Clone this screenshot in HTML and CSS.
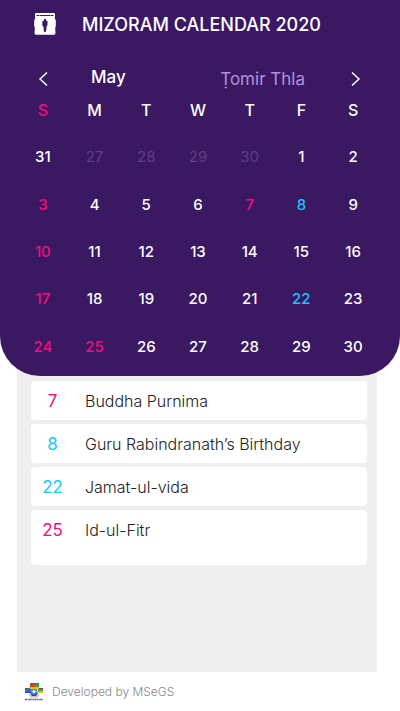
FILE: index.html
```html
<!DOCTYPE html>
<html lang="en">
<head>
<meta charset="utf-8">
<meta name="viewport" content="width=device-width, initial-scale=1">
<title>Mizoram Calendar 2020</title>
<link rel="stylesheet" href="styles.css">
</head>
<body>
<section class="calendar">
  <header class="topbar">
    <svg class="app-icon" viewBox="0 0 22 22" aria-hidden="true">
      <path fill="#fff" d="M2 0h18q1 0 1 1v3.500l-.4 1 1.200 1.500v6l-.6 2 .3 5q0 1.800-1.500 1.800H2Q.5 21.800.5 20l.3-5-.6-2V7l1.200-1.500-.4-1V1q0-1 1-1z"/>
      <path fill="#3a1862" d="M2.500 2h3v1h-3zM6 2h10v1H6zM16.500 2h3v1h-3zM10.500 5.500l1.300.5.4 1.500 1.300.5v4l-.9 1.500-.3 4-1.300 2-1.200-1-.2-4.500-1.300-1.500V8.500l1.500-1z"/>
    </svg>
    <h1 class="title">MIZORAM CALENDAR 2020</h1>
  </header>
  <nav class="months">
    <button class="arrow" type="button" aria-label="Previous month">
      <svg viewBox="0 0 10 16"><path d="M9 1.500 2 8l7 6.500"/></svg>
    </button>
    <h2 class="month">May</h2>
    <span class="local-month">Ṭomir Thla</span>
    <button class="arrow" type="button" aria-label="Next month">
      <svg viewBox="0 0 10 16"><path d="M1 1.500 8 8l-7 6.500"/></svg>
    </button>
  </nav>
  <table class="grid">
    <thead>
      <tr><th class="red">S</th><th>M</th><th>T</th><th>W</th><th>T</th><th>F</th><th>S</th></tr>
    </thead>
    <tbody>
      <tr><td>31</td><td class="muted">27</td><td class="muted">28</td><td class="muted">29</td><td class="muted">30</td><td>1</td><td>2</td></tr>
      <tr><td class="red">3</td><td>4</td><td>5</td><td>6</td><td class="red">7</td><td class="blue">8</td><td>9</td></tr>
      <tr><td class="red">10</td><td>11</td><td>12</td><td>13</td><td>14</td><td>15</td><td>16</td></tr>
      <tr><td class="red">17</td><td>18</td><td>19</td><td>20</td><td>21</td><td class="blue">22</td><td>23</td></tr>
      <tr><td class="red">24</td><td class="red">25</td><td>26</td><td>27</td><td>28</td><td>29</td><td>30</td></tr>
    </tbody>
  </table>
</section>
<main class="panel">
  <ul class="events">
    <li class="event"><span class="day red">7</span><span class="name">Buddha Purnima</span></li>
    <li class="event"><span class="day blue">8</span><span class="name">Guru Rabindranath’s Birthday</span></li>
    <li class="event"><span class="day blue">22</span><span class="name">Jamat-ul-vida</span></li>
    <li class="event tall"><span class="day red">25</span><span class="name">Id-ul-Fitr</span></li>
  </ul>
</main>
<footer class="footer">
  <svg class="logo" viewBox="0 0 20 20" aria-hidden="true">
    <path fill="#dcdfe4" d="M4 12h12l-2 4H6z"/>
    <path fill="#3168d4" d="M1 7h8v4H1z"/>
    <path fill="#d9402e" d="M6 2h5v3H6z"/>
    <path fill="#35a345" d="M11 2h4v3h-4zM14 7h5v2h-5z"/>
    <path fill="#efb91c" d="M6 5h9v2H6zM13 9h6v2h-6z"/>
    <path fill="#254a9b" d="M1 10h7v1H1zM6 11h8l-2 3H8z"/>
    <path stroke="#25334e" stroke-width=".8" fill="none" d="M6 1.500h9M1 6.500h5M15 6.500h4"/>
    <path fill="#4b8ce8" d="M7 7h6v4l-3 2-3-2z"/>
    <circle cx="10" cy="9.500" r="1.500" fill="#fff"/>
    <path fill="none" stroke="#b8bbc2" d="M5 13q5 4 10 0"/>
    <path fill="none" stroke="#666" stroke-width="1.500" stroke-dasharray="2 .4 1 .4" d="M1 17.500h18"/>
  </svg>
  <span>Developed by MSeGS</span>
</footer>
</body>
</html>
```
FILE: styles.css
```css
* {
  box-sizing: border-box;
}

body {
  display: flex;
  flex-direction: column;
  min-height: 100vh;
  margin: 0;
  background: #fff;
  font-family: Inter, "Open Sans", sans-serif;
  font-size: 16px;
}

.calendar {
  position: relative;
  padding-bottom: 6px;
  border-radius: 0 0 40px 40px;
  background: #3a1862;
  color: #fff;
}

.topbar {
  display: flex;
  align-items: center;
  gap: 26px;
  height: 48px;
  padding-left: 34px;
}

.app-icon {
  width: 22px;
  height: 22px;
}

.title {
  margin: 0;
  font-size: 18px;
  font-weight: 500;
}

.months {
  display: flex;
  align-items: center;
  height: 38px;
  padding: 24px 39px 0 38px;
}

.month,
.local-month {
  font-size: 17px;
  font-weight: 500;
  line-height: 20px;
}

.month {
  margin: 0 0 4px 43px;
}

.local-month {
  margin: 0 46px 0 auto;
  color: #b191dd;
  font-weight: 400;
}

.arrow {
  display: flex;
  padding: 0;
  border: 0;
  background: none;
}

.arrow svg {
  width: 10px;
  height: 16px;
  fill: none;
  stroke: #fff;
  stroke-width: 1.5;
}

.grid {
  width: calc(100% - 38px);
  height: 284px;
  margin: 0 21px 0 17px;
  border-collapse: collapse;
  table-layout: fixed;
}

.grid th,
.grid td {
  height: 47px;
  padding: 0;
  font-size: 15px;
  font-weight: 500;
  text-align: center;
}

.grid th {
  font-size: 16px;
}

.grid .muted {
  color: #603e86;
  font-weight: 400;
}

.red {
  color: #f20d7f;
}

.blue {
  color: #14c8fa;
}

.panel {
  flex: 1;
  margin: -40px 23px 0 17px;
  padding: 45px 10px 0 14px;
  background: #efefef;
}

.events {
  display: grid;
  gap: 4px;
  margin: 0;
  padding: 0;
  list-style: none;
}

.event {
  display: flex;
  align-items: center;
  height: 39px;
  border-radius: 4px;
  background: #fff;
}

.event.tall {
  align-items: flex-start;
  height: 55px;
  padding-top: 10px;
}

.day {
  width: 43px;
  font-size: 17px;
  line-height: 20px;
  text-align: center;
}

.name {
  margin-left: 11px;
  color: #222;
  font-size: 16px;
  font-weight: 300;
  line-height: 20px;
}

.footer {
  display: flex;
  align-items: center;
  gap: 8px;
  height: 39px;
  padding-left: 24px;
  color: #888;
  font-size: 12px;
  font-weight: 300;
}

.logo {
  width: 20px;
  height: 20px;
}
```
